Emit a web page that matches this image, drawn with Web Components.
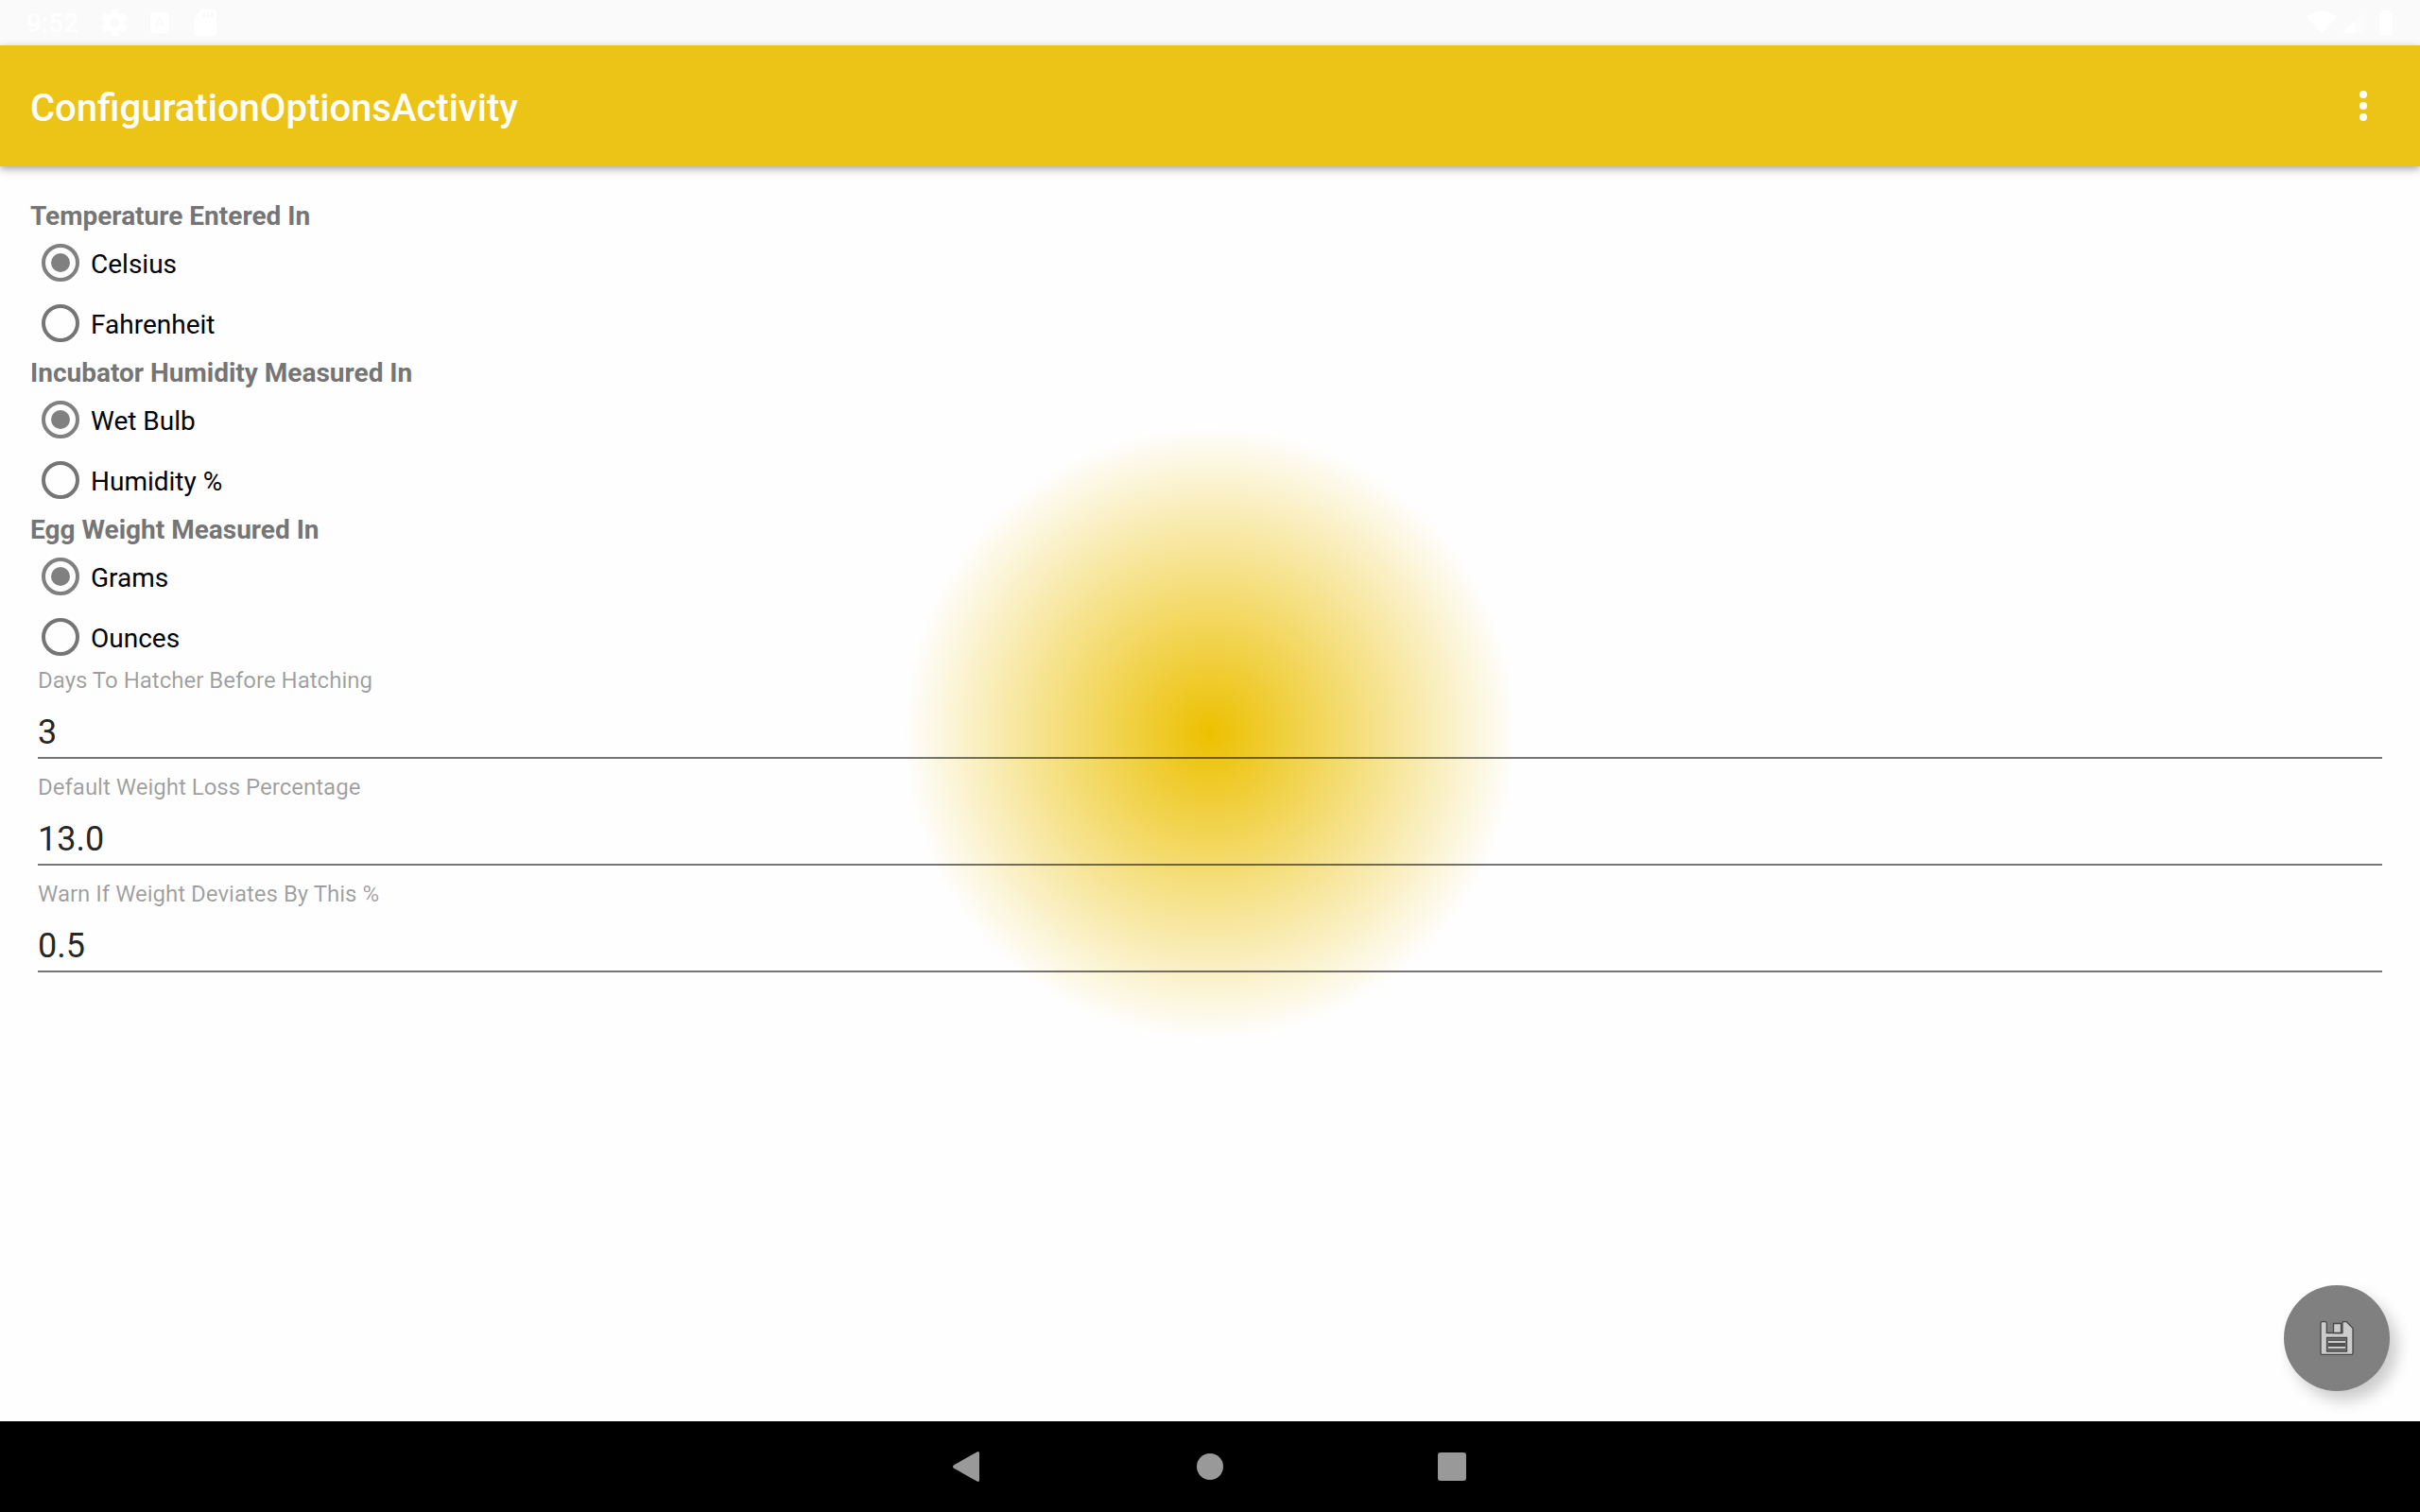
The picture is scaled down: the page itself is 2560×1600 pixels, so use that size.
<!DOCTYPE html>
<html lang="en">
<head>
<meta charset="utf-8">
<title>ConfigurationOptionsActivity</title>
<style>
  html, body { margin: 0; height: 100%; }
  body { font-family: Roboto, "Liberation Sans", sans-serif; background: #fefefe; }
</style>
</head>
<body>
<config-screen></config-screen>
<script>
function define(name, html, setup) {
  const template = document.createElement('template');
  template.innerHTML = html;
  customElements.define(name, class extends HTMLElement {
    constructor() {
      super();
      this.attachShadow({ mode: 'open' }).append(template.content.cloneNode(true));
    }
    connectedCallback() { if (setup) setup(this, this.shadowRoot); }
  });
}

define('status-bar', `
  <style>
    :host { display: flex; align-items: center; justify-content: space-between; height: 48px; padding: 0 28px; background: #fafafa; color: #fff; }
    div { display: flex; align-items: center; }
    .left { gap: 24px; }
    .right { gap: 4px; }
    time { font-size: 28px; font-weight: 500; line-height: 48px; padding-top: 2px; }
    svg { display: block; fill: #fff; }
    .battery { margin-left: 12px; }
  </style>
  <div class="left">
    <time>9:52</time>
    <svg width="28" height="28" viewBox="2 2 20 20"><path d="M19.43 12.98c.04-.32.07-.64.07-.98s-.03-.66-.07-.98l2.11-1.65c.19-.15.24-.42.12-.64l-2-3.46c-.12-.22-.39-.3-.61-.22l-2.49 1c-.52-.4-1.08-.73-1.69-.98l-.38-2.65C14.46 2.18 14.25 2 14 2h-4c-.25 0-.46.18-.49.42l-.38 2.65c-.61.25-1.17.59-1.69.98l-2.49-1c-.23-.09-.49 0-.61.22l-2 3.46c-.13.22-.07.49.12.64l2.11 1.65c-.04.32-.07.65-.07.98s.03.66.07.98l-2.11 1.65c-.19.15-.24.42-.12.64l2 3.46c.12.22.39.3.61.22l2.49-1c.52.4 1.08.73 1.69.98l.38 2.65c.03.24.24.42.49.42h4c.25 0 .46-.18.49-.42l.38-2.65c.61-.25 1.17-.59 1.69-.98l2.49 1c.23.09.49 0 .61-.22l2-3.46c.12-.22.07-.49-.12-.64l-2.11-1.65zM12 15.5c-1.93 0-3.5-1.57-3.5-3.5s1.57-3.5 3.5-3.5 3.5 1.57 3.5 3.5-1.57 3.5-3.5 3.5z"/></svg>
    <svg width="22" height="24" viewBox="0 0 22 24"><path fill-rule="evenodd" d="M2 1h16a2 2 0 0 1 2 2v18a2 2 0 0 1-2 2H2a2 2 0 0 1-2-2V3a2 2 0 0 1 2-2zM9 6 5 17h2l1-3h4l1 3h2L11 6zM10 8l1.500 4.500h-3zM11 20v1h2v-1zM14 20v1h2v-1zM17 20v1h1v-1z"/></svg>
    <svg width="24" height="28" viewBox="4 2 16 20" preserveAspectRatio="none"><path d="M18 2h-8L4.020 8 4 20c0 1.100.9 2 2 2h12c1.100 0 2-.9 2-2V4c0-1.100-.9-2-2-2zm-6 6h-2V4h2v4zm3 0h-2V4h2v4zm3 0h-2V4h2v4z"/></svg>
  </div>
  <div class="right">
    <svg width="32" height="26" viewBox="0 0 32 26"><path d="M0 6Q16-4 32 6L17 24q-1 1-2 0z"/></svg>
    <svg width="24" height="24" viewBox="0 0 24 24"><path d="M24 1v22H2z" opacity=".35"/><path d="M15 10v13H2z"/></svg>
    <svg class="battery" width="16" height="28" viewBox="0 0 16 28"><path d="M4 1h8v2h2q1 0 1 1v22q0 1-1 1H2q-1 0-1-1V4q0-1 1-1h2z"/></svg>
  </div>`);

define('app-bar', `
  <style>
    :host { display: flex; align-items: center; justify-content: space-between; height: 128px; padding: 0 20px 0 32px; background: #ecc417; color: #fff; box-shadow: 0 3px 8px rgba(0,0,0,.34); position: relative; z-index: 1; }
    h1 { margin: 0; padding-top: 6px; font-size: 40px; font-weight: 500; line-height: 48px; }
    button { display: flex; justify-content: center; align-items: center; width: 80px; height: 96px; padding: 0; border: 0; background: none; }
    svg { fill: #fff; }
  </style>
  <h1><slot></slot></h1>
  <button type="button" aria-label="More options"><svg width="8" height="32" viewBox="0 0 8 32"><circle cx="4" cy="4" r="4"/><circle cx="4" cy="16" r="4"/><circle cx="4" cy="28" r="4"/></svg></button>`);

define('radio-group', `
  <style>
    :host { display: block; }
    fieldset { display: block; margin: 0; padding: 0; border: 0; min-width: 0; }
    legend { display: block; padding: 0; height: 38px; line-height: 42px; font-size: 28px; font-weight: 700; color: #757575; }
    label { display: flex; align-items: center; height: 64px; font-size: 28px; color: #000; }
    span { padding-top: 4px; line-height: 32px; }
    input { appearance: none; box-sizing: border-box; display: grid; place-items: center; width: 40px; height: 40px; margin: 12px; border: 4px solid #757575; border-radius: 50%; }
    input:checked { border-color: #808080; }
    input:checked::before { content: ""; width: 20px; height: 20px; border-radius: 50%; background: #808080; }
  </style>
  <fieldset><legend></legend></fieldset>`, (host, root) => {
  const set = root.querySelector('fieldset');
  set.querySelector('legend').textContent = host.getAttribute('heading');
  host.getAttribute('options').split('|').forEach((text, i) => {
    const label = document.createElement('label');
    const input = document.createElement('input');
    const span = document.createElement('span');
    input.type = 'radio';
    input.name = 'choice';
    input.checked = i === 0;
    span.textContent = text;
    label.append(input, span);
    set.append(label);
  });
});

define('text-field', `
  <style>
    :host { display: block; height: 113px; padding: 0 8px; }
    label { display: block; height: 34px; font-size: 24px; line-height: 28px; color: rgba(0,0,0,.38); }
    input { display: block; box-sizing: border-box; width: 100%; height: 63px; margin: 0; padding: 15px 0 6px; border: 0; border-bottom: 2px solid rgba(0,0,0,.54); border-radius: 0; outline: 0; background: none; font: 36px/40px Roboto, "Liberation Sans", sans-serif; color: rgba(0,0,0,.87); }
  </style>
  <label for="value"></label><input id="value" type="text" inputmode="decimal">`, (host, root) => {
  root.querySelector('label').textContent = host.getAttribute('label');
  root.querySelector('input').value = host.getAttribute('value');
});

define('save-button', `
  <style>
    :host { display: block; }
    button { display: flex; align-items: center; justify-content: center; width: 112px; height: 112px; padding: 0; border: 0; border-radius: 50%; background: #808080; box-shadow: 8px 10px 16px rgba(0,0,0,.2); }
  </style>
  <button type="button" aria-label="Save"><svg width="36" height="36" viewBox="0 0 36 36">
    <path d="M2 .7h4q1.300 0 1.300 1.300v10.500H24V2q0-1.300 1.300-1.300h3L35 7.500V34q0 1.500-1.500 1.500H2.500Q1 35.500 1 34V2Q1 .7 2 .7z" fill="#ccc" stroke="#484848" stroke-width="1.300"/>
    <path d="M14.500 2.500h8v10h-8z" fill="#ccc" stroke="#484848" stroke-width="1.300"/>
    <path d="M7.500 17.500h21v14.500h-21z" fill="#777" stroke="#484848" stroke-width="1.300"/>
    <path d="M9 19.500h18v10.500H9z" fill="#505050"/><path d="M9 22h18M9 28h18" stroke="#ccc" stroke-width="2"/>
  </svg></button>`);

define('nav-bar', `
  <style>
    :host { display: flex; justify-content: center; height: 96px; background: #000; }
    button { display: flex; align-items: center; justify-content: center; width: 256px; padding: 0; border: 0; background: none; }
    svg { fill: #999; }
  </style>
  <button type="button" aria-label="Back"><svg width="32" height="32" viewBox="0 0 32 32"><path d="M25.500.4Q28-.8 28 2v28q0 2.800-2.500 1.600L.8 17.600Q-.8 16 .8 14.400z"/></svg></button>
  <button type="button" aria-label="Home"><svg width="28" height="28" viewBox="0 0 28 28"><circle cx="14" cy="14" r="14"/></svg></button>
  <button type="button" aria-label="Overview"><svg width="30" height="30" viewBox="0 0 30 30"><rect width="30" height="30" rx="3"/></svg></button>`);

define('config-screen', `
  <style>
    :host { display: flex; flex-direction: column; min-height: 100vh; }
    .app { flex: 1; display: flex; flex-direction: column; background: radial-gradient(circle 325px at center, #ecc000, rgba(236,192,0,0)) #fefefe; }
    main { flex: 1; display: flex; flex-direction: column; padding: 32px; }
    save-button { margin-top: auto; align-self: flex-end; }
  </style>
  <status-bar></status-bar>
  <div class="app">
    <app-bar>ConfigurationOptionsActivity</app-bar>
    <main>
      <radio-group heading="Temperature Entered In" options="Celsius|Fahrenheit"></radio-group>
      <radio-group heading="Incubator Humidity Measured In" options="Wet Bulb|Humidity %"></radio-group>
      <radio-group heading="Egg Weight Measured In" options="Grams|Ounces"></radio-group>
      <text-field label="Days To Hatcher Before Hatching" value="3"></text-field>
      <text-field label="Default Weight Loss Percentage" value="13.0"></text-field>
      <text-field label="Warn If Weight Deviates By This %" value="0.5"></text-field>
      <save-button></save-button>
    </main>
  </div>
  <nav-bar></nav-bar>`);
</script>
</body>
</html>
